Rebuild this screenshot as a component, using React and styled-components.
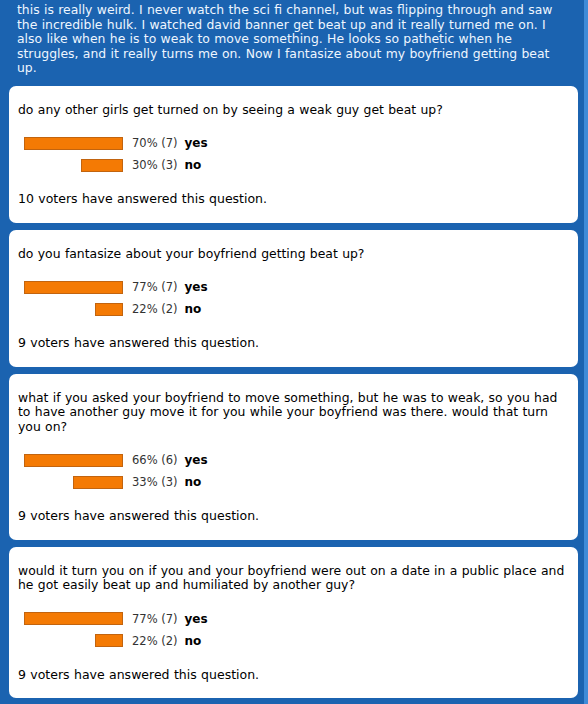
import React from "react";
import styled, { createGlobalStyle } from "styled-components";

const GlobalStyle = createGlobalStyle`
  html, body {
    margin: 0;
    padding: 0;
    background: #1b63b0;
  }
  body {
    font-family: Verdana, "DejaVu Sans", sans-serif;
    overflow: hidden;
  }
`;

const Page = styled.div`
  width: 588px;
  min-height: 704px;
  box-sizing: border-box;
  padding: 3px 6px 12px 9px;
  background: #1b63b0;
  border-right: 4px solid #3f8bd8;
`;

const Intro = styled.p`
  margin: 0 0 10px;
  padding: 0 12px 0 8px;
  color: #eef6ff;
  font-size: 12.4px;
  line-height: 14.5px;
  word-spacing: 0.4px;
`;

const Card = styled.section`
  background: #fff;
  border-radius: 7px;
  padding: 17px 9px 16px;
  margin-bottom: 7px;
  color: #000;
`;

const Question = styled.div`
  font-size: 12.4px;
  line-height: 14.5px;
  word-spacing: 0.4px;
  margin-bottom: 15px;
`;

const Results = styled.div`
  display: flex;
  flex-direction: column;
`;

const Row = styled.div`
  display: flex;
  align-items: center;
  height: 22px;
`;

const Track = styled.div`
  width: 99px;
  margin-left: 6px;
  display: flex;
  justify-content: flex-end;
`;

const Bar = styled.div`
  height: 13px;
  box-sizing: border-box;
  background: #f47a04;
  border: 1px solid #c2640f;
`;

const Count = styled.span`
  margin-left: 9px;
  font-size: 11.5px;
  color: #333;
  white-space: pre;
`;

const Answer = styled.span`
  margin-left: 7px;
  font-size: 12px;
  font-weight: bold;
`;

const Footer = styled.div`
  margin-top: 16px;
  font-size: 12.5px;
  line-height: 14.5px;
  word-spacing: 0.4px;
`;

const polls = [
  {
    q: "do any other girls get turned on by seeing a weak guy get beat up?",
    answers: [
      { label: "yes", pct: 70, n: 7 },
      { label: "no", pct: 30, n: 3 },
    ],
    voters: 10,
  },
  {
    q: "do you fantasize about your boyfriend getting beat up?",
    answers: [
      { label: "yes", pct: 77, n: 7 },
      { label: "no", pct: 22, n: 2 },
    ],
    voters: 9,
  },
  {
    q: "what if you asked your boyfriend to move something, but he was to weak, so you had to have another guy move it for you while your boyfriend was there. would that turn you on?",
    answers: [
      { label: "yes", pct: 66, n: 6 },
      { label: "no", pct: 33, n: 3 },
    ],
    voters: 9,
  },
  {
    q: "would it turn you on if you and your boyfriend were out on a date in a public place and he got easily beat up and humiliated by another guy?",
    answers: [
      { label: "yes", pct: 77, n: 7 },
      { label: "no", pct: 22, n: 2 },
    ],
    voters: 9,
  },
];

const Poll = ({ poll }) => {
  const max = Math.max(...poll.answers.map((a) => a.pct));
  return (
    <Card>
      <Question>{poll.q}</Question>
      <Results>
        {poll.answers.map((a) => (
          <Row key={a.label}>
            <Track>
              <Bar style={{ width: Math.round((99 * a.pct) / max) }} />
            </Track>
            <Count>{`${a.pct}% (${a.n})`}</Count>
            <Answer>{a.label}</Answer>
          </Row>
        ))}
      </Results>
      <Footer>{poll.voters} voters have answered this question.</Footer>
    </Card>
  );
};

const App = () => (
  <Page>
    <GlobalStyle />
    <Intro>
      this is really weird. I never watch the sci fi channel, but was flipping
      through and saw the incredible hulk. I watched david banner get beat up
      and it really turned me on. I also like when he is to weak to move
      something. He looks so pathetic when he struggles, and it really turns me
      on. Now I fantasize about my boyfriend getting beat up.
    </Intro>
    {polls.map((p, i) => (
      <Poll key={i} poll={p} />
    ))}
  </Page>
);

export default App;
